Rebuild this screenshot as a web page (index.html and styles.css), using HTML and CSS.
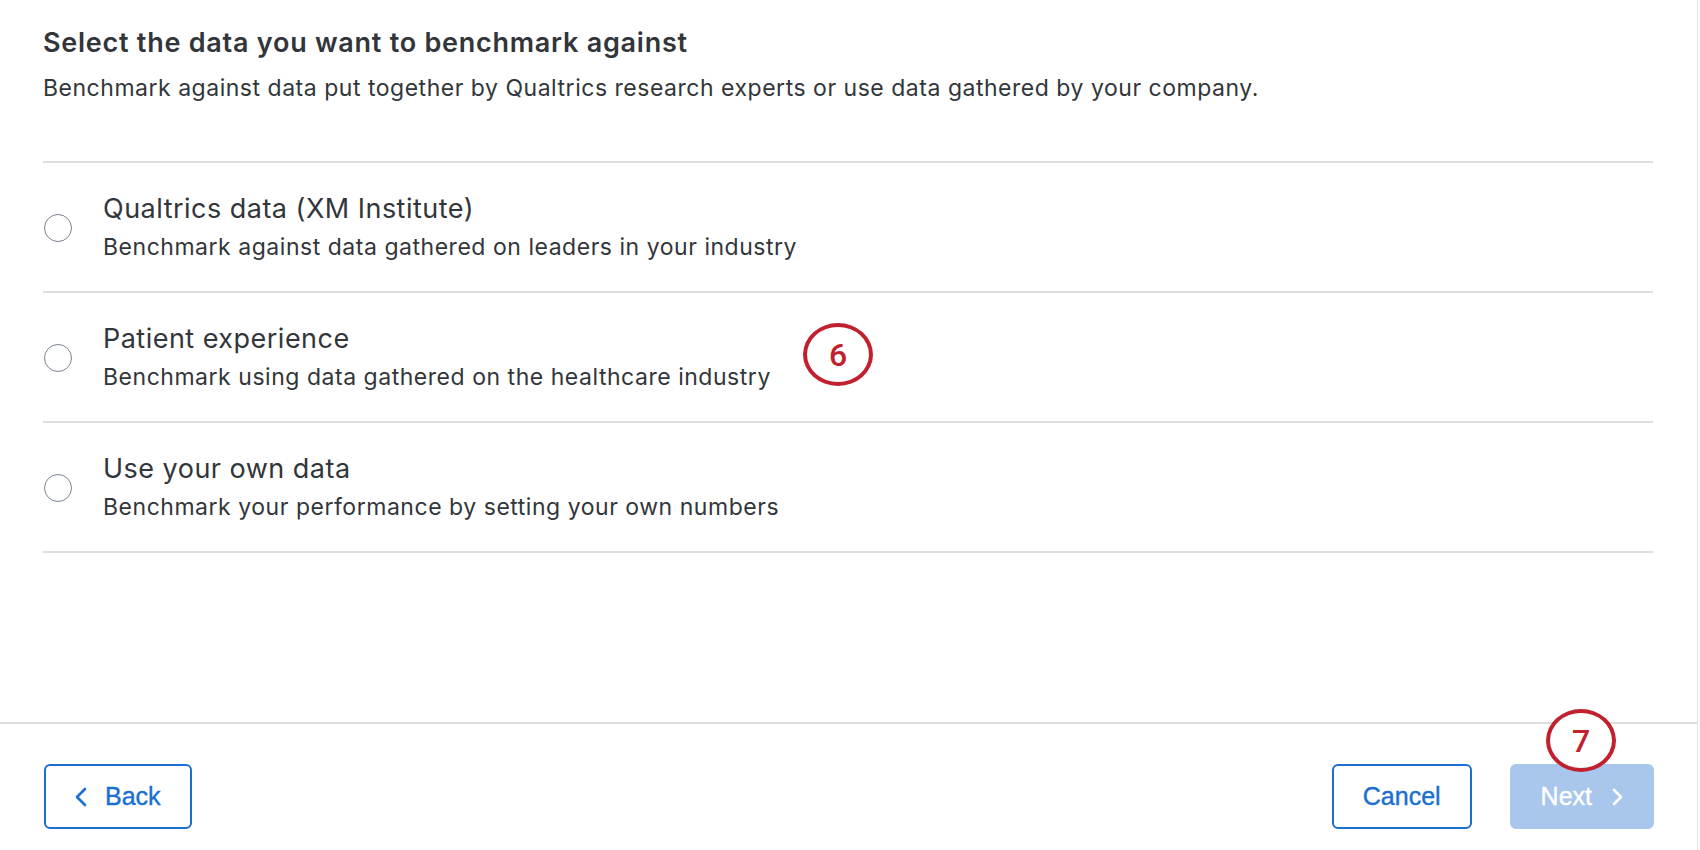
FILE: index.html
```html
<!doctype html>
<html lang="en">
<head>
    <meta charset="UTF-8">
    <title>Benchmark data</title>
    <link rel="stylesheet" href="styles.css">
</head>
<body>
    <div class="page">
        <!-- Step content -->
        <div class="main">
            <h1 class="heading">Select the data you want to benchmark against</h1>
            <p class="subtitle">Benchmark against data put together by Qualtrics research experts or use data gathered by your company.</p>

            <div class="options">
                <label class="option">
                    <span class="radio"></span>
                    <span class="option-text">
                        <span class="option-title">Qualtrics data (XM Institute)</span>
                        <span class="option-desc">Benchmark against data gathered on leaders in your industry</span>
                    </span>
                </label>
                <label class="option">
                    <span class="radio"></span>
                    <span class="option-text">
                        <span class="option-title">Patient experience</span>
                        <span class="option-desc">Benchmark using data gathered on the healthcare industry</span>
                    </span>
                </label>
                <label class="option">
                    <span class="radio"></span>
                    <span class="option-text">
                        <span class="option-title">Use your own data</span>
                        <span class="option-desc">Benchmark your performance by setting your own numbers</span>
                    </span>
                </label>
            </div>
        </div>

        <!-- Footer buttons -->
        <div class="footer">
            <button class="btn btn-outline">
                <svg class="chev" width="12" height="20" viewBox="0 0 12 20"><polyline points="10,2 2,10 10,18" fill="none" stroke="currentColor" stroke-width="2.6" stroke-linecap="round" stroke-linejoin="round"/></svg>
                Back
            </button>
            <div class="footer-right">
                <button class="btn btn-outline">Cancel</button>
                <button class="btn btn-primary" disabled>
                    Next
                    <svg class="chev" width="11" height="18" viewBox="0 0 11 18"><polyline points="2,2 9,9 2,16" fill="none" stroke="currentColor" stroke-width="2.6" stroke-linecap="round" stroke-linejoin="round"/></svg>
                </button>
            </div>
        </div>

        <!-- Annotation markers -->
        <div class="callout callout-6">6</div>
        <div class="callout callout-7">7</div>
    </div>
</body>
</html>
```

FILE: styles.css
```css
* {
    margin: 0;
    padding: 0;
    box-sizing: border-box;
}

body {
    font-family: 'Inter', 'Noto Sans', sans-serif;
    color: #32363a;
    background: #fff;
}

.page {
    position: relative;
    height: 850px;
    margin-right: 2px;
    border-right: 1px solid #e3e3e3;
    display: flex;
    flex-direction: column;
}

/* Main content */
.main {
    flex: 1;
    padding: 26px 44px 0 43px;
}

.heading {
    font-size: 27px;
    font-weight: 600;
    line-height: 34px;
    letter-spacing: 0.75px;
}

.subtitle {
    font-size: 23px;
    line-height: 32px;
    margin-top: 12px;
    letter-spacing: 0.52px;
}

.options {
    margin-top: 57px;
    border-top: 2px solid #dedede;
}

.option {
    display: flex;
    align-items: center;
    gap: 31px;
    padding: 29px 0 28px 1px;
    border-bottom: 2px solid #dedede;
}

.radio {
    width: 28px;
    height: 28px;
    border-radius: 50%;
    border: 1.5px solid #7a8392;
    flex-shrink: 0;
}

.option-text {
    display: flex;
    flex-direction: column;
}

.option-title {
    font-size: 27px;
    line-height: 34px;
    letter-spacing: 0.48px;
}

.option-desc {
    font-size: 23px;
    line-height: 32px;
    margin-top: 5px;
    letter-spacing: 0.53px;
}

/* Footer */
.footer {
    height: 128px;
    border-top: 2px solid #dedede;
    display: flex;
    justify-content: space-between;
    align-items: flex-start;
    padding: 40px 43px 0 44px;
}

.footer-right {
    display: flex;
    gap: 38px;
}

.btn {
    font-family: 'Liberation Sans', Arial, sans-serif;
    font-size: 25px;
    height: 65px;
    padding: 0 29px;
    border-radius: 6px;
    display: flex;
    align-items: center;
    gap: 18px;
    cursor: pointer;
    -webkit-text-stroke: 0.4px currentColor;
}

.btn-outline {
    background: #fff;
    color: #1a6fd0;
    border: 2px solid #1a6fd0;
}

.btn-primary {
    background: #a9c6ed;
    color: #fff;
    border: 2px solid #a9c6ed;
    gap: 20px;
    cursor: default;
}

/* Annotation markers */
.callout {
    position: absolute;
    width: 70px;
    height: 63px;
    border: 4px solid #c1212f;
    border-radius: 50%;
    background: #fff;
    color: #c1212f;
    font-family: 'Roboto', 'Liberation Sans', sans-serif;
    font-size: 32px;
    font-weight: 500;
    display: flex;
    align-items: center;
    justify-content: center;
}

.callout-6 {
    left: 803px;
    top: 323px;
}

.callout-7 {
    left: 1546px;
    top: 709px;
}
```
